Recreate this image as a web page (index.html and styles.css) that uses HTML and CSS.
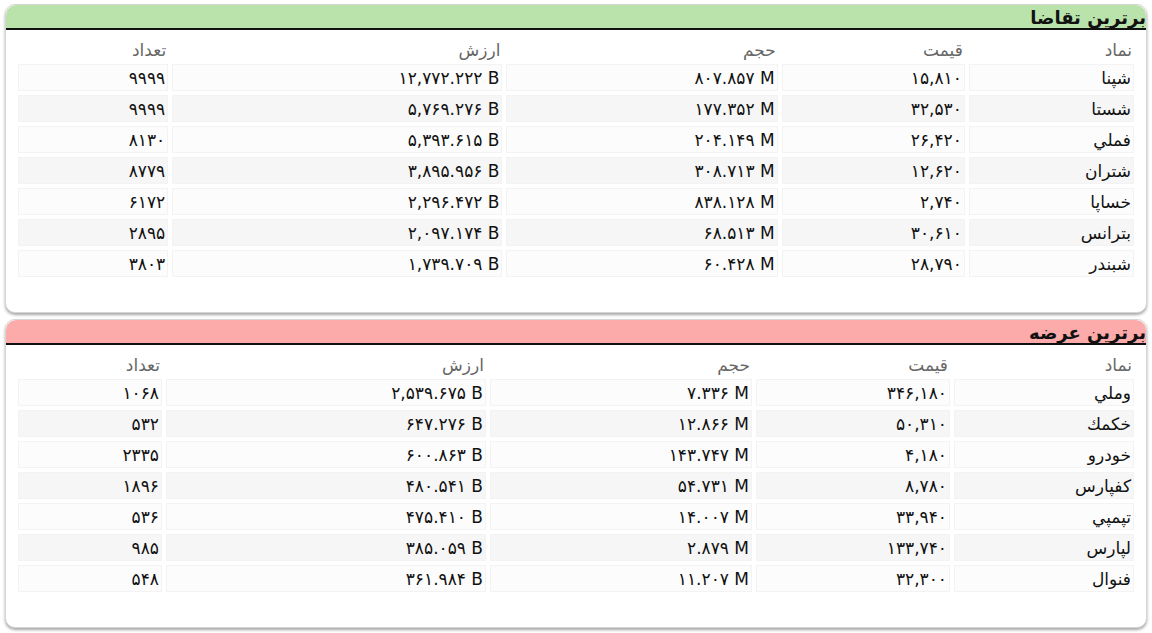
FILE: index.html
```html
<!DOCTYPE html>
<html lang="fa" dir="rtl">
<head>
<meta charset="utf-8">
<link rel="stylesheet" href="styles.css">
</head>
<body>
<section class="card">
  <h2 class="card-title demand">برترین تقاضا</h2>
  <table class="grid grid-demand">
    <colgroup><col class="c1"><col class="c2"><col class="c3"><col class="c4"><col class="c5"></colgroup>
    <thead><tr><th>نماد</th><th>قیمت</th><th>حجم</th><th>ارزش</th><th>تعداد</th></tr></thead>
    <tbody>
      <tr><td>شپنا</td><td>۱۵,۸۱۰</td><td class="num">۸۰۷.۸۵۷ M</td><td class="num">۱۲,۷۷۲.۲۲۲ B</td><td>۹۹۹۹</td></tr>
      <tr><td>شستا</td><td>۳۲,۵۳۰</td><td class="num">۱۷۷.۳۵۲ M</td><td class="num">۵,۷۶۹.۲۷۶ B</td><td>۹۹۹۹</td></tr>
      <tr><td>فملي</td><td>۲۶,۴۲۰</td><td class="num">۲۰۴.۱۴۹ M</td><td class="num">۵,۳۹۳.۶۱۵ B</td><td>۸۱۳۰</td></tr>
      <tr><td>شتران</td><td>۱۲,۶۲۰</td><td class="num">۳۰۸.۷۱۳ M</td><td class="num">۳,۸۹۵.۹۵۶ B</td><td>۸۷۷۹</td></tr>
      <tr><td>خساپا</td><td>۲,۷۴۰</td><td class="num">۸۳۸.۱۲۸ M</td><td class="num">۲,۲۹۶.۴۷۲ B</td><td>۶۱۷۲</td></tr>
      <tr><td>بترانس</td><td>۳۰,۶۱۰</td><td class="num">۶۸.۵۱۳ M</td><td class="num">۲,۰۹۷.۱۷۴ B</td><td>۲۸۹۵</td></tr>
      <tr><td>شبندر</td><td>۲۸,۷۹۰</td><td class="num">۶۰.۴۲۸ M</td><td class="num">۱,۷۳۹.۷۰۹ B</td><td>۳۸۰۳</td></tr>
    </tbody>
  </table>
</section>
<section class="card">
  <h2 class="card-title supply">برترین عرضه</h2>
  <table class="grid grid-supply">
    <colgroup><col class="c1"><col class="c2"><col class="c3"><col class="c4"><col class="c5"></colgroup>
    <thead><tr><th>نماد</th><th>قیمت</th><th>حجم</th><th>ارزش</th><th>تعداد</th></tr></thead>
    <tbody>
      <tr><td>وملي</td><td>۳۴۶,۱۸۰</td><td class="num">۷.۳۳۶ M</td><td class="num">۲,۵۳۹.۶۷۵ B</td><td>۱۰۶۸</td></tr>
      <tr><td>خكمك</td><td>۵۰,۳۱۰</td><td class="num">۱۲.۸۶۶ M</td><td class="num">۶۴۷.۲۷۶ B</td><td>۵۳۲</td></tr>
      <tr><td>خودرو</td><td>۴,۱۸۰</td><td class="num">۱۴۳.۷۴۷ M</td><td class="num">۶۰۰.۸۶۳ B</td><td>۲۳۳۵</td></tr>
      <tr><td>كفپارس</td><td>۸,۷۸۰</td><td class="num">۵۴.۷۳۱ M</td><td class="num">۴۸۰.۵۴۱ B</td><td>۱۸۹۶</td></tr>
      <tr><td>تپمپي</td><td>۳۳,۹۴۰</td><td class="num">۱۴.۰۰۷ M</td><td class="num">۴۷۵.۴۱۰ B</td><td>۵۳۶</td></tr>
      <tr><td>لپارس</td><td>۱۳۳,۷۴۰</td><td class="num">۲.۸۷۹ M</td><td class="num">۳۸۵.۰۵۹ B</td><td>۹۸۵</td></tr>
      <tr><td>فنوال</td><td>۳۲,۳۰۰</td><td class="num">۱۱.۲۰۷ M</td><td class="num">۳۶۱.۹۸۴ B</td><td>۵۴۸</td></tr>
    </tbody>
  </table>
</section>
</body>
</html>
```
FILE: styles.css
```css
html, body {
  margin: 0;
  padding: 0;
  background: #ffffff;
}
body {
  padding: 4px 5px 0 5px;
  font-family: "DejaVu Sans", sans-serif;
  font-size: 17px;
  color: #111;
}
.card {
  background: #fff;
  border: 1px solid #d6d6d6;
  border-radius: 10px;
  box-shadow: 0 2px 3px rgba(0, 0, 0, 0.35);
  margin-bottom: 6px;
  padding-bottom: 31px;
  overflow: hidden;
}
.card-title {
  margin: 0;
  height: 23px;
  line-height: 25px;
  font-size: 18px;
  font-weight: bold;
  text-align: right;
  border-bottom: 2px solid #111;
  color: #111;
  border-radius: 10px 10px 0 0;
}
.demand { background: #b9e3ab; }
.supply { background: #fdaaaa; }
.grid {
  border-spacing: 4px;
  margin: 6px 8px 0 8px;
  width: calc(100% - 16px);
  table-layout: fixed;
}
.grid th {
  font-weight: normal;
  color: #666;
  text-align: right;
  padding: 0 2px;
  height: 20px;
}
.grid td {
  text-align: right;
  padding: 0 2px;
  height: 25px;
  background: #fcfcfc;
  border: 1px solid #f3f3f3;
}
.grid tbody tr:nth-child(even) td {
  background: #f6f6f6;
}
.grid td.num {
  direction: ltr;
}
.grid-demand .c1 { width: 165px; }
.grid-demand .c2 { width: 183px; }
.grid-demand .c3 { width: 271px; }
.grid-demand .c4 { width: 330px; }
.grid-demand .c5 { width: 150px; }
.grid-supply .c1 { width: 180px; }
.grid-supply .c2 { width: 194px; }
.grid-supply .c3 { width: 262px; }
.grid-supply .c4 { width: 320px; }
.grid-supply .c5 { width: 144px; }
```
